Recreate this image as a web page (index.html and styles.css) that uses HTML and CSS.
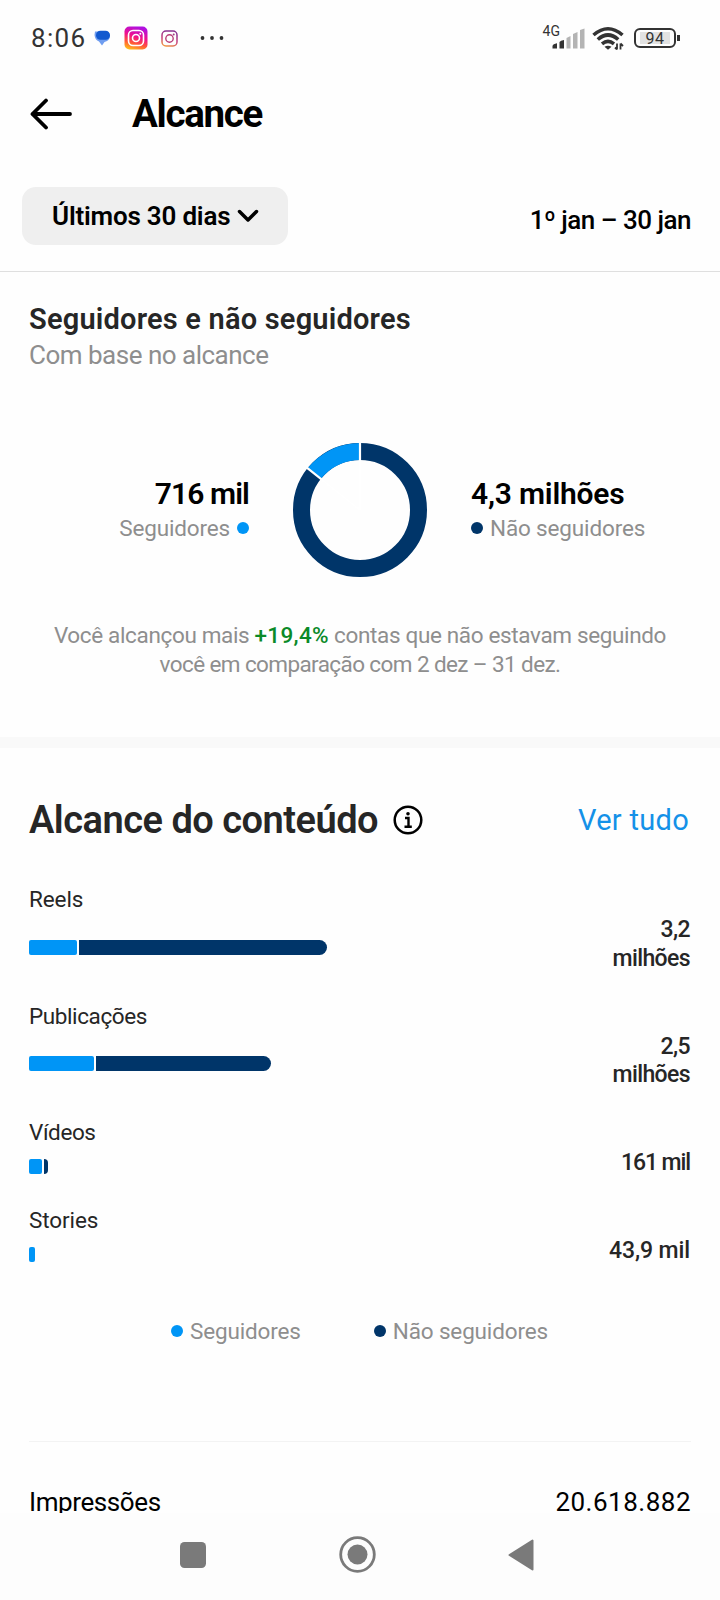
FILE: index.html
```
<!DOCTYPE html>
<html lang="pt-BR">
<head>
    <meta charset="UTF-8">
    <meta name="viewport" content="width=device-width, initial-scale=1.0">
    <title>Alcance</title>
    <link rel="stylesheet" href="styles.css">
</head>
<body>
    <div class="app">
        <div class="status-bar">
            <span class="clock">8:06</span>
            <svg class="icon-chat" width="17" height="16" viewBox="0 0 17 16">
                <path d="M1 1.500H12Q16 2 16 7Q15 11 10.500 12L8 15.500L5 11.500Q1 10 0.500 5Z" fill="#6f9df0"/>
                <rect x="2" y="0.800" width="14" height="9" rx="4.500" fill="#1259cf"/>
            </svg>
            <svg class="icon-insta" width="24" height="24" viewBox="0 0 24 24">
                <defs>
                    <linearGradient id="ig" x1="0.2" y1="1" x2="0.5" y2="0">
                        <stop offset="0" stop-color="#ffc21a"/>
                        <stop offset="0.3" stop-color="#ff5a35"/>
                        <stop offset="0.6" stop-color="#f0108c"/>
                        <stop offset="1" stop-color="#b010e0"/>
                    </linearGradient>
                </defs>
                <rect x="0.500" y="0.500" width="23" height="23" rx="5" fill="url(#ig)"/>
                <rect x="4.500" y="4.500" width="15" height="15" rx="4.500" fill="none" stroke="#fff" stroke-width="1.600"/>
                <circle cx="12" cy="12" r="3.500" fill="none" stroke="#fff" stroke-width="1.600"/>
                <circle cx="16.300" cy="7.700" r="1" fill="#fff"/>
            </svg>
            <svg class="icon-insta-line" width="17" height="17" viewBox="0 0 17 17">
                <defs>
                    <linearGradient id="igl" x1="0" y1="1" x2="0.3" y2="0">
                        <stop offset="0" stop-color="#f5a03c"/>
                        <stop offset="0.5" stop-color="#c8407c"/>
                        <stop offset="1" stop-color="#8a3290"/>
                    </linearGradient>
                </defs>
                <rect x="1" y="1" width="15" height="15" rx="4" fill="none" stroke="url(#igl)" stroke-width="1.500"/>
                <circle cx="8.500" cy="8.500" r="3.700" fill="none" stroke="#b83c78" stroke-width="1.400"/>
                <circle cx="12.700" cy="4.400" r="1" fill="#a03a80"/>
            </svg>
            <svg class="icon-more" width="24" height="6" viewBox="0 0 24 6">
                <circle cx="2.500" cy="3" r="1.900"/><circle cx="12" cy="3" r="1.900"/><circle cx="21.500" cy="3" r="1.900"/>
            </svg>
            <span class="network">4G</span>
            <svg class="icon-signal" width="33" height="21" viewBox="0 0 33 21">
                <path d="M0.500 20.500V18Q1 16 5 15.300V20.500Z M7.500 20.500V14Q8.500 12.500 12 12V20.500Z" fill="#333"/>
                <path d="M14.500 20.500V10L18.500 8V20.500Z M21 20.500V6L25.500 4V20.500Z M28 20.500V2L32.500 0.500V20.500Z" fill="#b4b4b4"/>
            </svg>
            <svg class="icon-wifi" width="32" height="24" viewBox="0 0 32 24">
                <g fill="none" stroke="#333" stroke-width="3.600">
                    <path d="M1.500 9Q16 -3.500 30.500 9"/>
                    <path d="M5.800 13.500Q16 4.500 26.200 13.500"/>
                    <path d="M10 17.800Q16 13 22 17.800"/>
                </g>
                <path d="M12.500 20.800Q16 18.500 19.500 20.800L16 23.800Z" fill="#333"/>
                <path d="M25 17.500V23.500M23 21.500L25 23.500M28.500 23.500V17.500M31 20L28.500 17.500" fill="none" stroke="#333" stroke-width="1.800"/>
            </svg>
            <div class="battery"><span>94</span></div>
        </div>

        <header class="header">
            <svg width="42" height="32" viewBox="0 0 42 32">
                <path d="M16 2.500L2.500 16L16 29.500M2.500 16H40" fill="none" stroke="#000" stroke-width="3.800" stroke-linecap="round" stroke-linejoin="round"/>
            </svg>
            <h1>Alcance</h1>
        </header>

        <div class="filter">
            <button class="period">
                <span>Últimos 30 dias</span>
                <svg width="22" height="14" viewBox="0 0 22 14">
                    <path d="M2.500 2.500L11 11L19.500 2.500" fill="none" stroke="#000" stroke-width="3.500" stroke-linecap="round" stroke-linejoin="round"/>
                </svg>
            </button>
            <span class="dates">1º jan – 30 jan</span>
        </div>

        <main class="content">
            <section class="audience">
                <h2>Seguidores e não seguidores</h2>
                <p class="subtitle">Com base no alcance</p>
                <div class="chart">
                    <div class="stat stat-left">
                        <strong>716 mil</strong>
                        <span class="label">Seguidores <i class="dot light"></i></span>
                    </div>
                    <svg class="donut" width="134" height="134" viewBox="0 0 134 134">
                        <g fill="none" stroke-width="17" transform="rotate(-90 67 67)">
                            <circle cx="67" cy="67" r="58.500" stroke="#003569"/>
                            <circle cx="67" cy="67" r="58.500" stroke="#0095f6" pathLength="100" stroke-dasharray="14.3 85.7" stroke-dashoffset="14.3"/>
                        </g>
                        <path d="M67 67V-1M67 67L13.800 24.600" stroke="#fff" stroke-width="2.200"/>
                    </svg>
                    <div class="stat">
                        <strong>4,3 milhões</strong>
                        <span class="label"><i class="dot dark"></i> Não seguidores</span>
                    </div>
                </div>
                <p class="note">Você alcançou mais <b>+19,4%</b> contas que não estavam seguindo<br><span>você em comparação com 2 dez – 31 dez.</span></p>
            </section>

            <section class="reach">
                <div class="reach-header">
                    <h2>Alcance do conteúdo</h2>
                    <svg width="30" height="30" viewBox="0 0 30 30">
                        <circle cx="15" cy="15" r="13.300" fill="none" stroke="#000" stroke-width="2.500"/>
                        <circle cx="15" cy="8.700" r="1.800"/>
                        <path d="M12 13H15.500V21.500M11.500 21.800H18.800" fill="none" stroke="#000" stroke-width="2.400"/>
                    </svg>
                    <a class="see-all">Ver tudo</a>
                </div>

                <div class="rows">
                    <div class="row">
                        <span class="name">Reels</span>
                        <div class="bar">
                            <div class="light" style="width: 48px"></div>
                            <div class="dark" style="width: 248px"></div>
                        </div>
                        <span class="value">3,2<br>milhões</span>
                    </div>
                    <div class="row">
                        <span class="name tight">Publicações</span>
                        <div class="bar">
                            <div class="light" style="width: 65px"></div>
                            <div class="dark" style="width: 175px"></div>
                        </div>
                        <span class="value">2,5<br>milhões</span>
                    </div>
                    <div class="row">
                        <span class="name tight">Vídeos</span>
                        <div class="bar">
                            <div class="light" style="width: 13px"></div>
                            <div class="dark" style="width: 4px"></div>
                        </div>
                        <span class="value tighter">161 mil</span>
                    </div>
                    <div class="row">
                        <span class="name">Stories</span>
                        <div class="bar">
                            <div class="light" style="width: 6px"></div>
                        </div>
                        <span class="value wide">43,9 mil</span>
                    </div>
                </div>

                <div class="legend">
                    <span class="label"><i class="dot light"></i> Seguidores</span>
                    <span class="label"><i class="dot dark"></i> Não seguidores</span>
                </div>
            </section>

            <div class="impressions">
                <span>Impressões</span>
                <span class="total">20.618.882</span>
            </div>
        </main>

        <nav class="nav">
            <svg width="26" height="26" viewBox="0 0 26 26"><rect width="26" height="26" rx="4.500" fill="#7a7a7a"/></svg>
            <svg width="37" height="37" viewBox="0 0 37 37">
                <circle cx="18.500" cy="18.500" r="16.800" fill="none" stroke="#7a7a7a" stroke-width="2.800"/>
                <circle cx="18.500" cy="18.500" r="10" fill="#7a7a7a"/>
            </svg>
            <svg width="26" height="32" viewBox="0 0 26 32"><path d="M1.500 16L24.500 1.500V30.500Z" fill="#7a7a7a" stroke="#7a7a7a" stroke-width="2" stroke-linejoin="round"/></svg>
        </nav>
    </div>
</body>
</html>
```
FILE: styles.css
```
        * {
            box-sizing: border-box;
        }
        body {
            margin: 0;
            background-color: #fefefe;
            font-family: Roboto, "Liberation Sans", sans-serif;
            color: #000;
        }
        h1, h2, p {
            margin: 0;
        }
        svg {
            display: block;
            flex-shrink: 0;
        }
        .app {
            width: 720px;
            height: 1600px;
            display: flex;
            flex-direction: column;
            overflow: hidden;
            white-space: nowrap;
        }

        /* status bar */
        .status-bar {
            display: flex;
            align-items: center;
            height: 76px;
            padding: 0 44px 0 31px;
            color: #333;
        }
        .clock {
            width: 63px;
            font-size: 26px;
            letter-spacing: 1.3px;
        }
        .icon-insta {
            margin-left: 13px;
        }
        .icon-insta-line {
            margin-left: 13px;
        }
        .icon-more {
            margin-left: 22px;
            fill: #333;
        }
        .network {
            margin-left: auto;
            margin-bottom: 15px;
            font-size: 14px;
        }
        .icon-signal {
            margin-left: -8px;
        }
        .icon-wifi {
            margin-left: 7px;
        }
        .battery {
            position: relative;
            display: flex;
            width: 42px;
            height: 20px;
            margin-left: 10px;
            padding: 2px 4px;
            border: 2px solid #333;
            border-radius: 6px;
        }
        .battery::after {
            content: "";
            position: absolute;
            right: -6px;
            top: 5px;
            width: 3px;
            height: 6px;
            background-color: #333;
        }
        .battery span {
            flex: 1;
            background-color: #e2e2e2;
            font-size: 16px;
            line-height: 13px;
            letter-spacing: 0.5px;
            text-align: center;
        }

        /* header */
        .header {
            display: flex;
            align-items: center;
            height: 76px;
            padding-left: 30px;
        }
        .header h1 {
            margin-left: 60px;
            padding-bottom: 2px;
            font-size: 38.5px;
            font-weight: 700;
            letter-spacing: -1.300px;
        }
        .filter {
            display: flex;
            justify-content: space-between;
            align-items: flex-start;
            height: 120px;
            padding: 35px 29px 0 22px;
            border-bottom: 1px solid #dfdfdf;
        }
        .period {
            display: flex;
            align-items: center;
            gap: 7px;
            width: 266px;
            height: 58px;
            padding: 0 0 1px 30px;
            border: none;
            border-radius: 14px;
            background-color: #efefef;
            color: #000;
            font-family: inherit;
            font-size: 26px;
            font-weight: 600;
            letter-spacing: -0.2px;
        }
        .dates {
            margin-top: 15px;
            font-size: 26px;
            font-weight: 500;
            line-height: 36px;
            letter-spacing: -0.5px;
        }

        /* content */
        .content {
            flex: 1;
            min-height: 0;
            overflow: hidden;
        }
        .audience {
            height: 476px;
            padding-top: 29px;
            border-bottom: 11px solid #f9f9f9;
        }
        .audience h2 {
            padding-left: 29px;
            font-size: 29px;
            font-weight: 600;
            line-height: 36px;
            letter-spacing: 0.2px;
            color: #262626;
        }
        .subtitle {
            padding-left: 29px;
            font-size: 26px;
            line-height: 36px;
            letter-spacing: -0.5px;
            color: #8e8e8e;
        }
        .chart {
            display: grid;
            grid-template-columns: 249px 134px 1fr;
            column-gap: 44px;
            align-items: center;
            margin-top: 70px;
        }
        .stat {
            display: flex;
            flex-direction: column;
        }
        .stat strong {
            font-size: 30px;
            font-weight: 600;
            line-height: 36px;
            letter-spacing: -0.2px;
        }
        .stat-left {
            align-items: flex-end;
        }
        .stat-left strong {
            letter-spacing: -0.9px;
        }
        .label {
            display: flex;
            align-items: center;
            gap: 7px;
            font-size: 22.5px;
            line-height: 32px;
            letter-spacing: -0.150px;
            color: #8e8e8e;
        }
        .dot {
            width: 12px;
            height: 12px;
            border-radius: 50%;
        }
        .light {
            background-color: #0095f6;
        }
        .dark {
            background-color: #003569;
        }
        .note {
            margin-top: 44px;
            font-size: 22.5px;
            line-height: 28.5px;
            letter-spacing: -0.350px;
            text-align: center;
            color: #8e8e8e;
        }
        .note b {
            font-weight: 500;
            letter-spacing: 0.3px;
            color: #0a8a28;
        }
        .note span {
            letter-spacing: -0.6px;
        }

        .reach {
            padding: 48px 30px 0 29px;
        }
        .reach-header {
            display: flex;
            align-items: center;
        }
        .reach-header h2 {
            margin-right: 15px;
            font-size: 38px;
            font-weight: 600;
            line-height: 48px;
            letter-spacing: -0.5px;
            color: #262626;
        }
        .see-all {
            margin-left: auto;
            padding-right: 1px;
            font-size: 29px;
            letter-spacing: 0.3px;
            color: #1491e8;
        }
        .rows {
            display: flex;
            flex-direction: column;
            gap: 29.300px;
            margin-top: 40px;
            color: #262626;
        }
        .row {
            display: grid;
            grid-template-columns: 1fr auto;
            align-items: center;
        }
        .name {
            grid-column: 1 / 3;
            font-size: 22.5px;
            line-height: 30px;
            letter-spacing: -0.1px;
        }
        .tight {
            letter-spacing: -0.4px;
        }
        .bar {
            display: flex;
            gap: 2px;
            margin-top: 9px;
        }
        .bar div {
            height: 15px;
            border-radius: 2px;
        }
        .bar .dark {
            border-radius: 0 8px 8px 0;
        }
        .value {
            padding-top: 2px;
            margin-bottom: -2px;
            font-size: 23px;
            font-weight: 500;
            line-height: 28.700px;
            letter-spacing: -0.6px;
            text-align: right;
        }
        .value.tighter {
            letter-spacing: -1.1px;
        }
        .value.wide {
            letter-spacing: -0.1px;
        }
        .legend {
            display: flex;
            gap: 73px;
            margin-top: 51px;
            padding-left: 142px;
        }
        .impressions {
            display: flex;
            justify-content: space-between;
            margin: 94px 29px 0;
            padding-top: 42px;
            border-top: 1px solid #f3f3f3;
            font-size: 26px;
            line-height: 36px;
            letter-spacing: -0.4px;
        }
        .total {
            letter-spacing: 0.5px;
        }

        .nav {
            display: flex;
            align-items: center;
            height: 87px;
            padding: 0 186px 4px 180px;
            justify-content: space-between;
            background-color: #fdfdfd;
        }
```
